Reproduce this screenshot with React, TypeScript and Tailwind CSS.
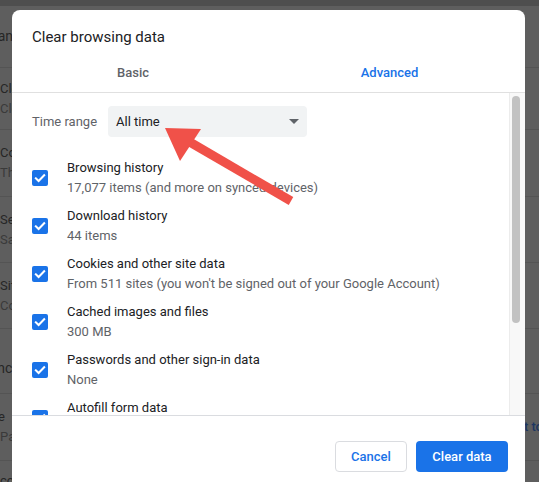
import React from "react";

const items = [
  { t: "Browsing history", s: "17,077 items (and more on synced devices)" },
  { t: "Download history", s: "44 items" },
  { t: "Cookies and other site data", s: "From 511 sites (you won't be signed out of your Google Account)" },
  { t: "Cached images and files", s: "300 MB" },
  { t: "Passwords and other sign-in data", s: "None" },
  { t: "Autofill form data", s: "" },
];

function Check() {
  return (
    <div className="w-[16px] h-[16px] shrink-0 rounded-[2px] bg-[#1a73e8] flex items-center justify-center">
      <svg width="16" height="16" viewBox="0 0 16 16">
        <polyline points="3.8,8.3 6.6,11 12.2,5.2" fill="none" stroke="white" strokeWidth="2" strokeLinecap="square" />
      </svg>
    </div>
  );
}

function BgRow({ h, a, b, right }: { h: number; a?: string; b?: string; right?: string }) {
  return (
    <div className="border-b border-[#545454] flex justify-between items-center" style={{ height: h }}>
      <div className="flex flex-col text-[13px] leading-[20px]">
        {a && <span className="text-[#262626]">{a}</span>}
        {b && <span className="text-[#3a3a3a]">{b}</span>}
      </div>
      {right && <span className="text-[13px] font-medium text-[#1d3661] mr-[-4px]">{right}</span>}
    </div>
  );
}

export default function App() {
  return (
    <div className="relative w-[539px] h-[482px] overflow-hidden bg-[#5e5e5e] font-['Roboto',sans-serif]">
      {/* background page */}
      <div className="flex flex-col">
        <div className="h-[6px] bg-[#4e4e4e]" />
        <div className="h-[62px] border-b border-[#545454] flex items-center">
          <span className="ml-[-26px] text-[14px] text-[#262626]">Advanced</span>
        </div>
        <BgRow h={62} a="Clear browsing data" b="Clear history" />
        <BgRow h={67} a="Cookies" b="Third-party" />
        <BgRow h={66} a="Security" b="Safe Browsing" />
        <BgRow h={66} a="Site settings" b="Controls" />
        <div className="h-[65px] border-b border-[#545454] flex items-center">
          <span className="ml-[-34px] text-[14px] text-[#262626] mt-[14px]">Advanced</span>
        </div>
        <div className="h-[67px] border-b border-[#545454] flex justify-between items-center">
          <div className="flex flex-col text-[13px] leading-[20px]">
            <span className="text-[#262626] ml-[-2px]">e</span>
            <span className="text-[#3a3a3a]">Passwords</span>
          </div>
          <span className="text-[13px] font-medium text-[#1d3661] mr-[-4px]">Import to</span>
        </div>
        <div className="h-[30px] text-[13px] text-[#262626] pt-[10px]">co</div>
      </div>

      {/* dialog */}
      <div className="absolute left-[12px] top-[10px] w-[513px] h-[490px] bg-white rounded-t-[8px] flex flex-col">
        <div className="pt-[17px] pl-[20px] text-[15px] leading-[20px] text-[#202124]">Clear browsing data</div>
        <div className="mt-[6px] h-[40px] flex items-center border-b border-[#e0e0e0] text-[13px] font-medium">
          <div className="w-[242px] text-center text-[#5f6368]">Basic</div>
          <div className="flex-1 text-center text-[#1a73e8]">Advanced</div>
        </div>
        <div className="h-[322px] flex">
          <div className="flex-1 overflow-hidden pl-[20px]">
            <div className="pt-[13px] flex items-center">
              <div className="w-[76px] text-[13px] text-[#5f6368]">Time range</div>
              <div className="w-[199px] h-[31px] bg-[#f1f3f4] rounded-[4px] flex items-center justify-between pl-[8px] pr-[8px]">
                <span className="text-[13px] text-[#202124]">All time</span>
                <svg width="10" height="5" viewBox="0 0 10 5"><polygon points="0,0 10,0 5,5" fill="#5f6368" /></svg>
              </div>
            </div>
            <div className="mt-[17px] flex flex-col">
              {items.map((it) => (
                <div key={it.t} className="h-[48px] flex items-center gap-[19px] shrink-0">
                  <Check />
                  <div className="flex flex-col text-[13px] leading-[20px]">
                    <span className="text-[#202124]">{it.t}</span>
                    <span className="text-[#5f6368]">{it.s || "\u00a0"}</span>
                  </div>
                </div>
              ))}
            </div>
          </div>
          <div className="w-[16px] border-l border-[#ececec] bg-[#f8f8f8] pt-[3px]">
            <div className="ml-[2px] w-[8px] h-[227px] rounded-[4px] bg-[#c2c2c2]" />
          </div>
        </div>
        <div className="border-t border-[#dadce0] pt-[25px] pr-[17px] flex justify-end gap-[9px]">
          <button className="w-[72px] h-[31px] rounded-[4px] border border-[#dadce0] bg-white text-[13px] font-medium text-[#1a73e8]">Cancel</button>
          <button className="w-[92px] h-[31px] rounded-[4px] bg-[#1a73e8] text-[13px] font-medium text-white">Clear data</button>
        </div>
      </div>

      {/* red arrow annotation */}
      <svg className="absolute left-0 top-0" width="539" height="482" viewBox="0 0 539 482">
        <line x1="188" y1="141" x2="291" y2="201" stroke="#f05149" strokeWidth="9" />
        <polygon points="165,128 201,129 180,161" fill="#f05149" />
      </svg>
    </div>
  );
}
